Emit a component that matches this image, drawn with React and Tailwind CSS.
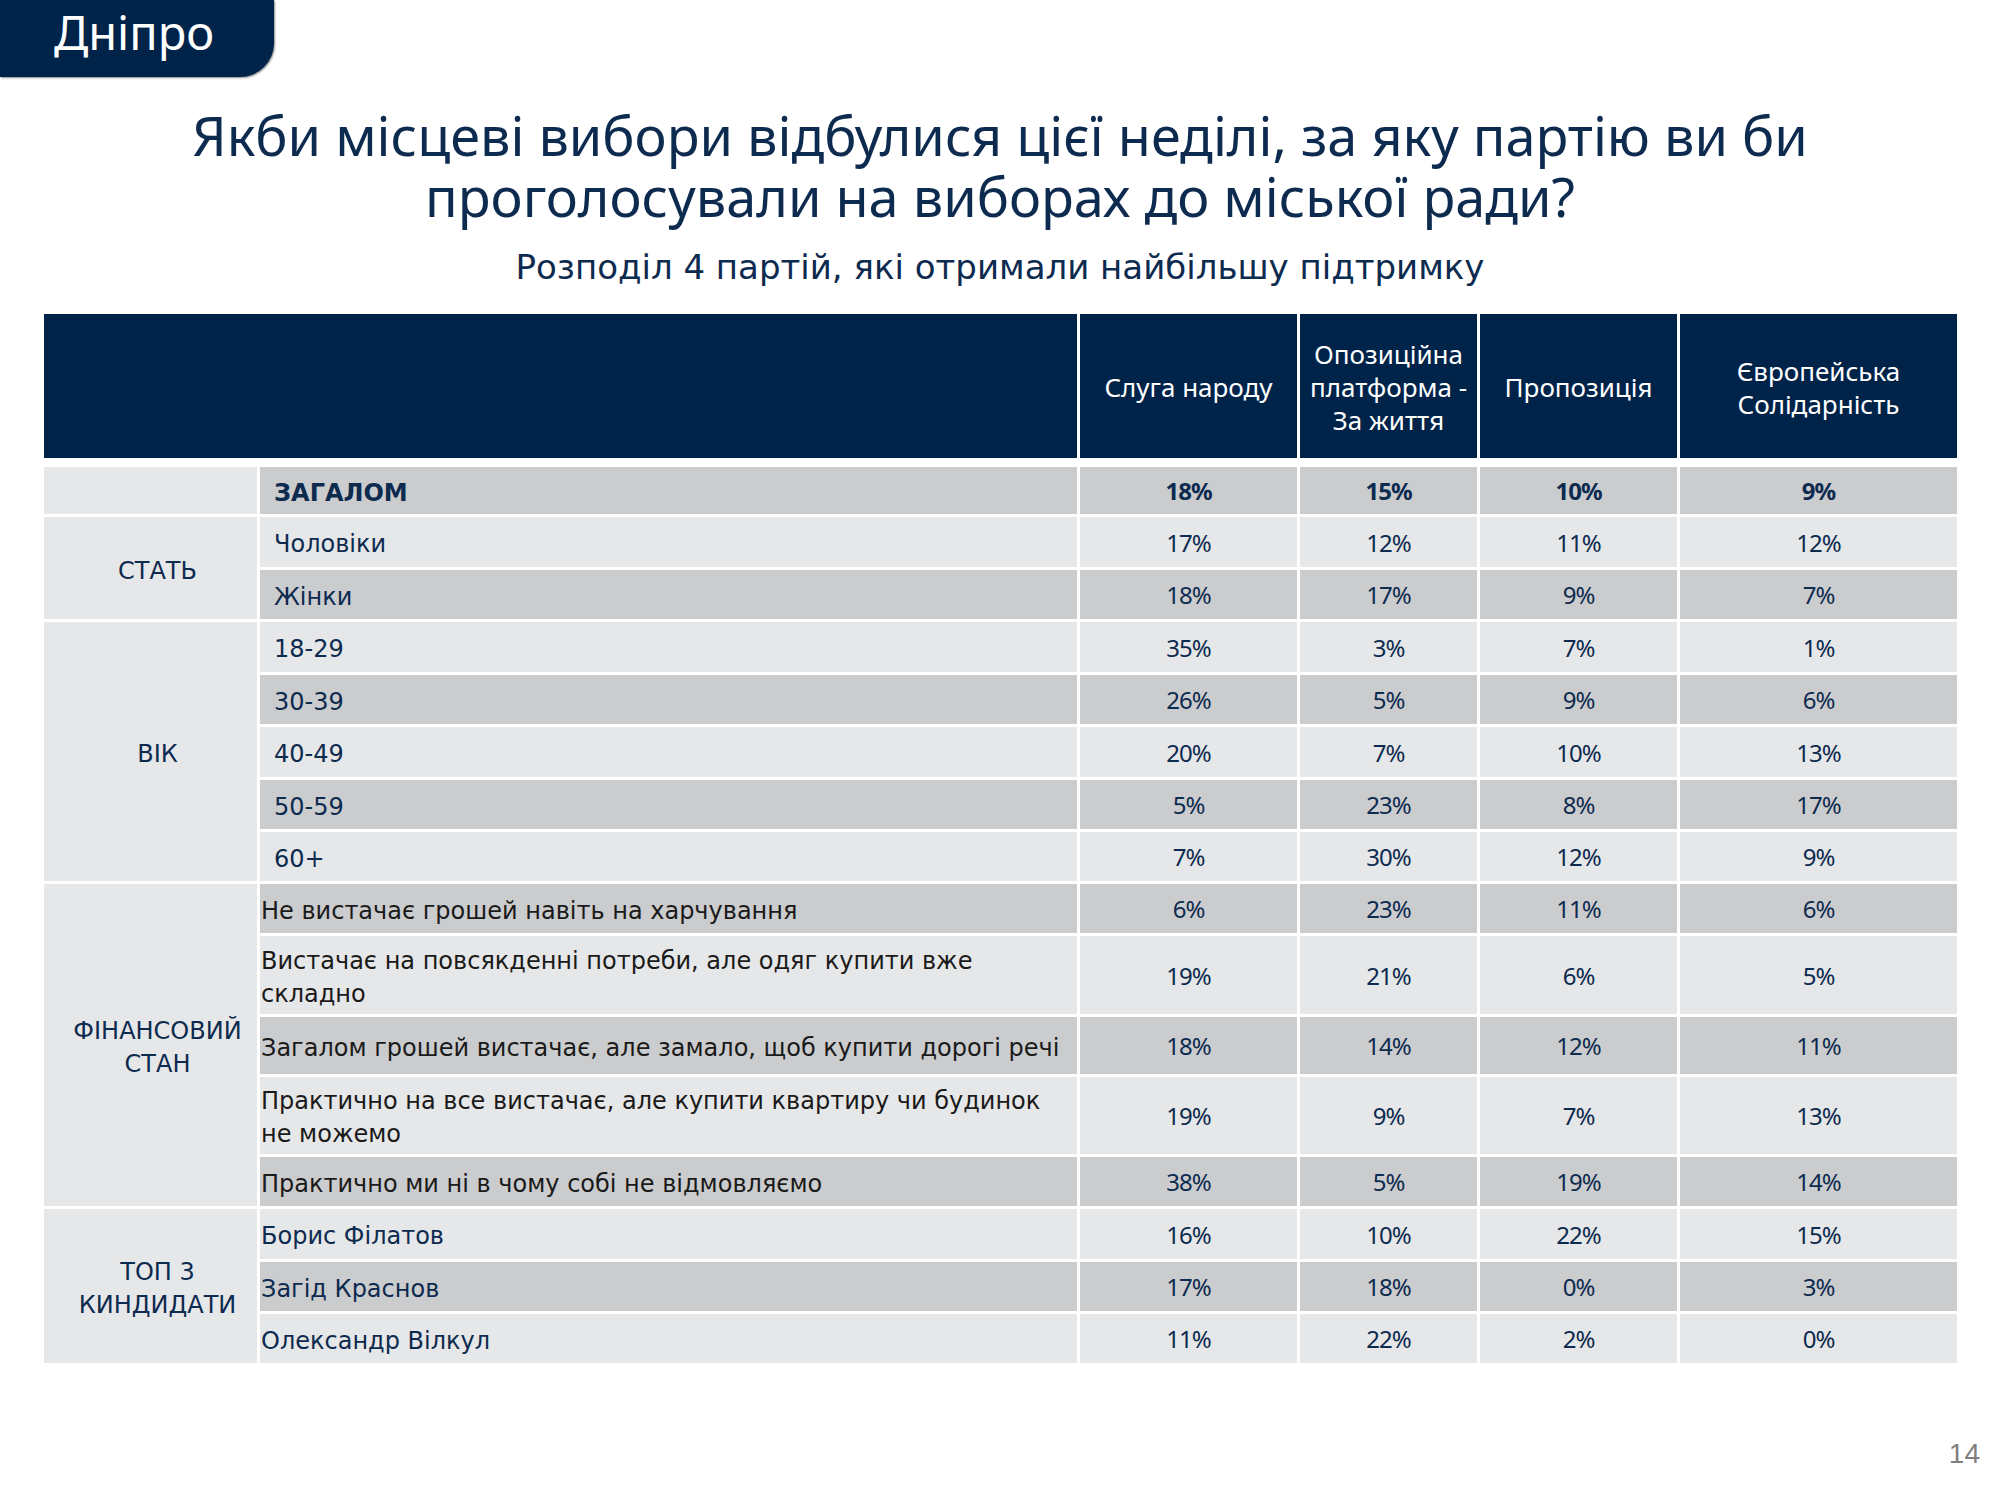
import React from "react";

const navy = "text-[#0d2a4f]";

const parties = [
  ["Слуга народу"],
  ["Опозиційна", "платформа -", "За життя"],
  ["Пропозиція"],
  ["Європейська", "Солідарність"],
];

// group blocks of the table, each row: [label, values, height, label style]
const groups = [
  {
    name: [],
    rows: [{ label: "ЗАГАЛОМ", vals: ["18%", "15%", "10%", "9%"], h: "h-[47px]", bold: true }],
  },
  {
    name: ["СТАТЬ"],
    rows: [
      { label: "Чоловіки", vals: ["17%", "12%", "11%", "12%"], h: "h-[50px]" },
      { label: "Жінки", vals: ["18%", "17%", "9%", "7%"], h: "h-[49px]" },
    ],
  },
  {
    name: ["ВІК"],
    rows: [
      { label: "18-29", vals: ["35%", "3%", "7%", "1%"], h: "h-[50px]" },
      { label: "30-39", vals: ["26%", "5%", "9%", "6%"], h: "h-[49px]" },
      { label: "40-49", vals: ["20%", "7%", "10%", "13%"], h: "h-[50px]" },
      { label: "50-59", vals: ["5%", "23%", "8%", "17%"], h: "h-[49px]" },
      { label: "60+", vals: ["7%", "30%", "12%", "9%"], h: "h-[49px]" },
    ],
  },
  {
    name: ["ФІНАНСОВИЙ", "СТАН"],
    rows: [
      { label: "Не вистачає грошей навіть на харчування", vals: ["6%", "23%", "11%", "6%"], h: "h-[49px]", fin: true },
      { label: "Вистачає на повсякденні потреби, але одяг купити вже складно", vals: ["19%", "21%", "6%", "5%"], h: "h-[78px]", fin: true },
      { label: "Загалом грошей вистачає, але замало, щоб купити дорогі речі", vals: ["18%", "14%", "12%", "11%"], h: "h-[57px]", fin: true },
      { label: "Практично на все вистачає, але купити квартиру чи будинок не можемо", vals: ["19%", "9%", "7%", "13%"], h: "h-[77px]", fin: true },
      { label: "Практично ми ні в чому собі не відмовляємо", vals: ["38%", "5%", "19%", "14%"], h: "h-[49px]", fin: true },
    ],
  },
  {
    name: ["ТОП 3", "КИНДИДАТИ"],
    rows: [
      { label: "Борис Філатов", vals: ["16%", "10%", "22%", "15%"], h: "h-[50px]", fin: true, navyText: true },
      { label: "Загід Краснов", vals: ["17%", "18%", "0%", "3%"], h: "h-[49px]", fin: true, navyText: true },
      { label: "Олександр Вілкул", vals: ["11%", "22%", "2%", "0%"], h: "h-[49px]", fin: true, navyText: true },
    ],
  },
];

const spans = ["row-span-1", "row-span-2", "row-span-3", "row-span-4", "row-span-5"];

export default function App() {
  let rowIndex = 0;
  const cells = [];
  groups.forEach((g, gi) => {
    cells.push(
      <div
        key={"g" + gi}
        className={`${spans[g.rows.length - 1]} bg-[#e6e7e8] flex flex-col items-center justify-center pl-[14px] pt-[6px] text-[24px] leading-[33px] ${navy}`}
      >
        {g.name.map((n) => (
          <span key={n}>{n}</span>
        ))}
      </div>
    );
    g.rows.forEach((r, ri) => {
      const bg = rowIndex % 2 === 0 ? "bg-[#cbcccd]" : "bg-[#e6e7e8]";
      rowIndex++;
      const labelColor = r.fin && !r.navyText ? "text-[#1a1a1a]" : navy;
      cells.push(
        <div
          key={`l${gi}-${ri}`}
          className={`${r.h} ${bg} ${labelColor} flex items-center pt-[5px] text-[24px] leading-[33px] ${r.fin ? "pl-[1px] pr-[2px]" : "pl-[14px]"} ${r.bold ? "font-bold" : ""}`}
        >
          {r.label}
        </div>
      );
      r.vals.forEach((v, vi) => {
        cells.push(
          <div
            key={`v${gi}-${ri}-${vi}`}
            className={`${bg} ${navy} flex items-center justify-center pt-[1px] text-[24px] tracking-[-1px] font-['Noto_Sans',sans-serif] ${r.bold ? "font-bold" : ""}`}
          >
            {v}
          </div>
        );
      });
    });
  });

  return (
    <div className="w-[2000px] h-[1500px] bg-white flex flex-col font-['DejaVu_Sans',sans-serif] overflow-hidden">
      {/* region tab */}
      <div className="w-[274px] h-[77px] bg-[#00234a] rounded-br-[34px] shadow-[1px_1px_2px_rgba(0,0,0,0.45)] flex items-center pl-[54px]">
        <span className="text-white text-[47px] leading-none font-['Noto_Sans',sans-serif] -mt-[12px]">Дніпро</span>
      </div>

      {/* title */}
      <h1 className={`mt-[28px] flex flex-col items-center text-[54px] leading-[61px] font-['Noto_Sans',sans-serif] ${navy}`}>
        <span>Якби місцеві вибори відбулися цієї неділі, за яку партію ви би</span>
        <span>проголосували на виборах до міської ради?</span>
      </h1>
      <p className={`mt-[19px] text-center text-[34px] leading-[42px] ${navy}`}>
        Розподіл 4 партій, які отримали найбільшу підтримку
      </p>

      {/* table */}
      <div className="ml-[44px] mt-[26px] w-[1913px]">
        <div className="grid grid-cols-[1033px_217px_177px_197px_277px] gap-x-[3px] h-[144px] bg-white">
          <div className="bg-[#00234a]" />
          {parties.map((p, i) => (
            <div
              key={i}
              className="bg-[#00234a] flex flex-col items-center justify-center pt-[3px] text-white text-[26px] leading-[33px] font-['Noto_Sans',sans-serif]"
            >
              {p.map((line) => (
                <span key={line}>{line}</span>
              ))}
            </div>
          ))}
        </div>
        <div className="mt-[9px] grid grid-cols-[213px_817px_217px_177px_197px_277px] gap-[3px]">
          {cells}
        </div>
      </div>

      <div className="flex-1" />
      <div className="flex justify-end pr-[20px] pb-[30px]">
        <span className="text-[28px] leading-[32px] text-[#7f7f7f] font-['Liberation_Sans',sans-serif]">14</span>
      </div>
    </div>
  );
}
